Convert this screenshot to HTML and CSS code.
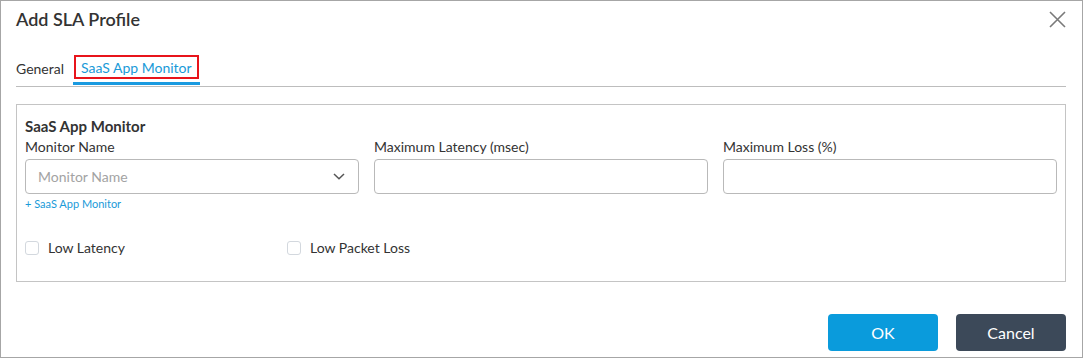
FILE: index.html
```html
<!DOCTYPE html>
<html lang="en">
<head>
<meta charset="utf-8">
<title>Add SLA Profile</title>
<link rel="stylesheet" href="styles.css">
</head>
<body>
<div class="dialog">
  <div class="header">
    <h1 class="title">Add SLA Profile</h1>
    <button class="close" aria-label="Close">
      <svg width="17" height="17" viewBox="0 0 17 17"><path d="M1 1 L16 16 M16 1 L1 16" stroke="#7a7a7a" stroke-width="1.6" fill="none"/></svg>
    </button>
  </div>
  <div class="tabs">
    <div class="tab">General</div>
    <div class="tab active"><span class="tab-label">SaaS App Monitor</span></div>
  </div>
  <div class="panel">
    <div class="panel-title">SaaS App Monitor</div>
    <div class="fields">
      <div class="field">
        <label class="label">Monitor Name</label>
        <div class="input select">
          <span class="placeholder">Monitor Name</span>
          <svg class="chevron" width="12" height="7" viewBox="0 0 12 7"><path d="M1 1 L6 5.8 L11 1" stroke="#555" stroke-width="1.5" fill="none"/></svg>
        </div>
        <a class="add-link">+ SaaS App Monitor</a>
      </div>
      <div class="field">
        <label class="label">Maximum Latency (msec)</label>
        <div class="input"></div>
      </div>
      <div class="field">
        <label class="label">Maximum Loss (%)</label>
        <div class="input"></div>
      </div>
    </div>
    <div class="checks">
      <label class="check"><span class="box"></span>Low Latency</label>
      <label class="check"><span class="box"></span>Low Packet Loss</label>
    </div>
  </div>
  <div class="footer">
    <button class="btn btn-ok">OK</button>
    <button class="btn btn-cancel">Cancel</button>
  </div>
</div>
</body>
</html>
```

FILE: styles.css
```css
* { box-sizing: border-box; }
html, body { margin: 0; padding: 0; background: #fff; }
body { font-family: Lato, "Noto Sans", sans-serif; color: #333; }

.dialog {
  width: 1083px;
  height: 358px;
  border: 1px solid #a6a6a6;
  padding: 7px 16px 0 15px;
  display: flex;
  flex-direction: column;
}

.header {
  display: flex;
  justify-content: space-between;
  align-items: flex-start;
}
.title {
  margin: 0;
  font-size: 18px;
  line-height: 22px;
  font-weight: 600;
  color: #333;
}
.close {
  border: 0;
  background: none;
  padding: 0;
  margin: 3px 0 0 0;
  width: 17px;
  height: 17px;
  display: block;
}
.close svg { display: block; }

.tabs {
  margin-top: 25px;
  display: flex;
  align-items: flex-end;
  gap: 9px;
  border-bottom: 1px solid #bdbdbd;
}
.tab {
  font-size: 14px;
  line-height: 17px;
  color: #333;
  padding-bottom: 8px;
  margin-bottom: 1px;
}
.tab.active {
  color: #1a9ad8;
  padding: 0 1px 3px;
  border-bottom: 3px solid #1a9ae0;
}
.tab-label {
  display: block;
  border: 2px solid #e8141b;
  padding: 3px 5px 1px 5px;
  line-height: 16px;
}

.panel {
  margin-top: 17px;
  border: 1px solid #c4c4c4;
  padding: 12px 8px 25px 8px;
}
.panel-title {
  font-size: 15px;
  line-height: 18px;
  font-weight: 700;
  color: #333;
}
.fields {
  margin-top: 3px;
  display: grid;
  grid-template-columns: repeat(3, 1fr);
  column-gap: 15px;
}
.field { display: flex; flex-direction: column; }
.label {
  font-size: 14px;
  line-height: 17px;
  color: #333;
}
.input {
  margin-top: 4px;
  height: 35px;
  border: 1px solid #b9b9b9;
  border-radius: 4px;
  display: flex;
  align-items: center;
  padding: 0 13px 0 12px;
}
.select { justify-content: space-between; }
.placeholder { font-size: 14px; color: #a3a3a3; }
.chevron { display: block; }
.add-link {
  margin-top: 3px;
  font-size: 11px;
  line-height: 14px;
  color: #1a9ad8;
}

.checks {
  margin-top: 28px;
  display: flex;
}
.check {
  width: 262px;
  display: flex;
  align-items: center;
  gap: 9px;
  font-size: 14px;
  line-height: 17px;
  color: #333;
}
.box {
  width: 14px;
  height: 14px;
  border: 1px solid #d3d8de;
  border-radius: 3px;
  background: #fff;
}

.footer {
  margin-top: 32px;
  display: flex;
  justify-content: flex-end;
  gap: 18px;
}
.btn {
  width: 110px;
  height: 37px;
  border: 0;
  border-radius: 4px;
  font-family: Lato, "Noto Sans", sans-serif;
  font-size: 16px;
  color: #fff;
}
.btn-ok { background: #0a9bdc; }
.btn-cancel { background: #3c4959; }
```
